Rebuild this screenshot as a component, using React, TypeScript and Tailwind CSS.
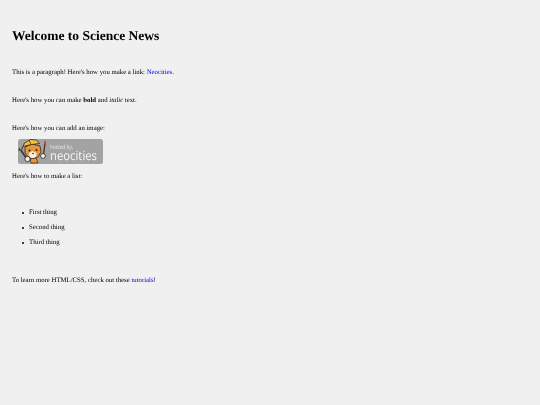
function Badge() {
  return (
    <svg className="block" width="85" height="25" viewBox="0 0 85 25">
      <rect width="85" height="25" rx="2.5" fill="#a3a3a3" />
      {/* wrench */}
      <path d="M2.500 10.500l6 9" stroke="#3d3d3d" strokeWidth="1.800" />
      <path d="M1 12l.5-3M4 10.500l.5-3" stroke="#3d3d3d" strokeWidth="1.200" />
      {/* head */}
      <path d="M7 8l7-3 8 2 1 6-3 5-5 2-5-2-3-4z" fill="#e8963a" stroke="#33261a" strokeWidth="0.8" />
      <path d="M11 14l3.500-2 4 2-.5 4-3.500 1.500-3-1.500z" fill="#f7f1e3" />
      <circle cx="11.500" cy="11.500" r="1" fill="#1d1d1d" />
      <circle cx="18.500" cy="11" r="1" fill="#1d1d1d" />
      <circle cx="15" cy="14.500" r="0.800" fill="#1d1d1d" />
      {/* hard hat */}
      <path d="M5 7.500l1.500-3.500 6-3.500 6 .5 3 3.500-8 1z" fill="#efc23f" stroke="#33261a" strokeWidth="0.8" />
      <path d="M11 1l2 4.500" stroke="#33261a" strokeWidth="0.7" />
      {/* body and paws */}
      <path d="M12 20l6-1 2 5h-7z" fill="#e8963a" stroke="#33261a" strokeWidth="0.7" />
      <circle cx="9.500" cy="20" r="2.600" fill="#f7f1e3" stroke="#222" strokeWidth="0.8" />
      {/* paintbrush */}
      <path d="M27 4.500l-1.800 13" stroke="#5a2a1c" strokeWidth="1.300" />
      <path d="M27.300 .8l.8 3.500-2.200 .2z" fill="#b8352b" />
      <circle cx="25" cy="17" r="2.400" fill="#f7f1e3" stroke="#222" strokeWidth="0.8" />
      <text x="32" y="9.700" fontFamily="Open Sans, sans-serif" fontSize="6" textLength="23" lengthAdjust="spacingAndGlyphs" fill="#e6e6e6">hosted by,</text>
      <text x="32" y="20.700" fontFamily="Open Sans, sans-serif" fontSize="12.500" textLength="47" lengthAdjust="spacingAndGlyphs" fill="#f6f6f6">neocities</text>
    </svg>
  )
}

const items = ['First thing', 'Second thing', 'Third thing']

export default function App() {
  return (
    <div className="min-h-[405px] bg-[#f0f0f0]">
      <div className="px-3 pt-[28px] font-['Liberation_Serif',serif] text-[6.78px] leading-[8px] text-black blur-[0.25px] [text-rendering:geometricPrecision]">
        <h1 className="text-[13.5px] leading-[16px] font-bold">Welcome to Science News</h1>

        <p className="mt-[24.500px]">
          This is a paragraph! Here's how you make a link: <a className="text-[#0000ee]" href="#">Neocities</a>.
        </p>

        <p className="mt-[20px]">
          Here's how you can make <strong>bold</strong> and <em>italic</em> text.
        </p>

        <p className="mt-[20.500px]">Here's how you can add an image:</p>

        <a className="mt-[6px] ml-[6px] block w-fit" href="#">
          <Badge />
        </a>

        <p className="mt-[9px]">Here's how to make a list:</p>

        <ul className="mt-[28px] ml-[9.500px] flex list-none flex-col gap-[7px]">
          {items.map((item) => (
            <li key={item} className="flex items-center gap-[5.500px]">
              <span className="size-[2px] rounded-full bg-black" />
              {item}
            </li>
          ))}
        </ul>

        <p className="mt-[29.500px]">
          To learn more HTML/CSS, check out these <a className="text-[#0000ee]" href="#">tutorials</a>!
        </p>
      </div>
    </div>
  )
}
